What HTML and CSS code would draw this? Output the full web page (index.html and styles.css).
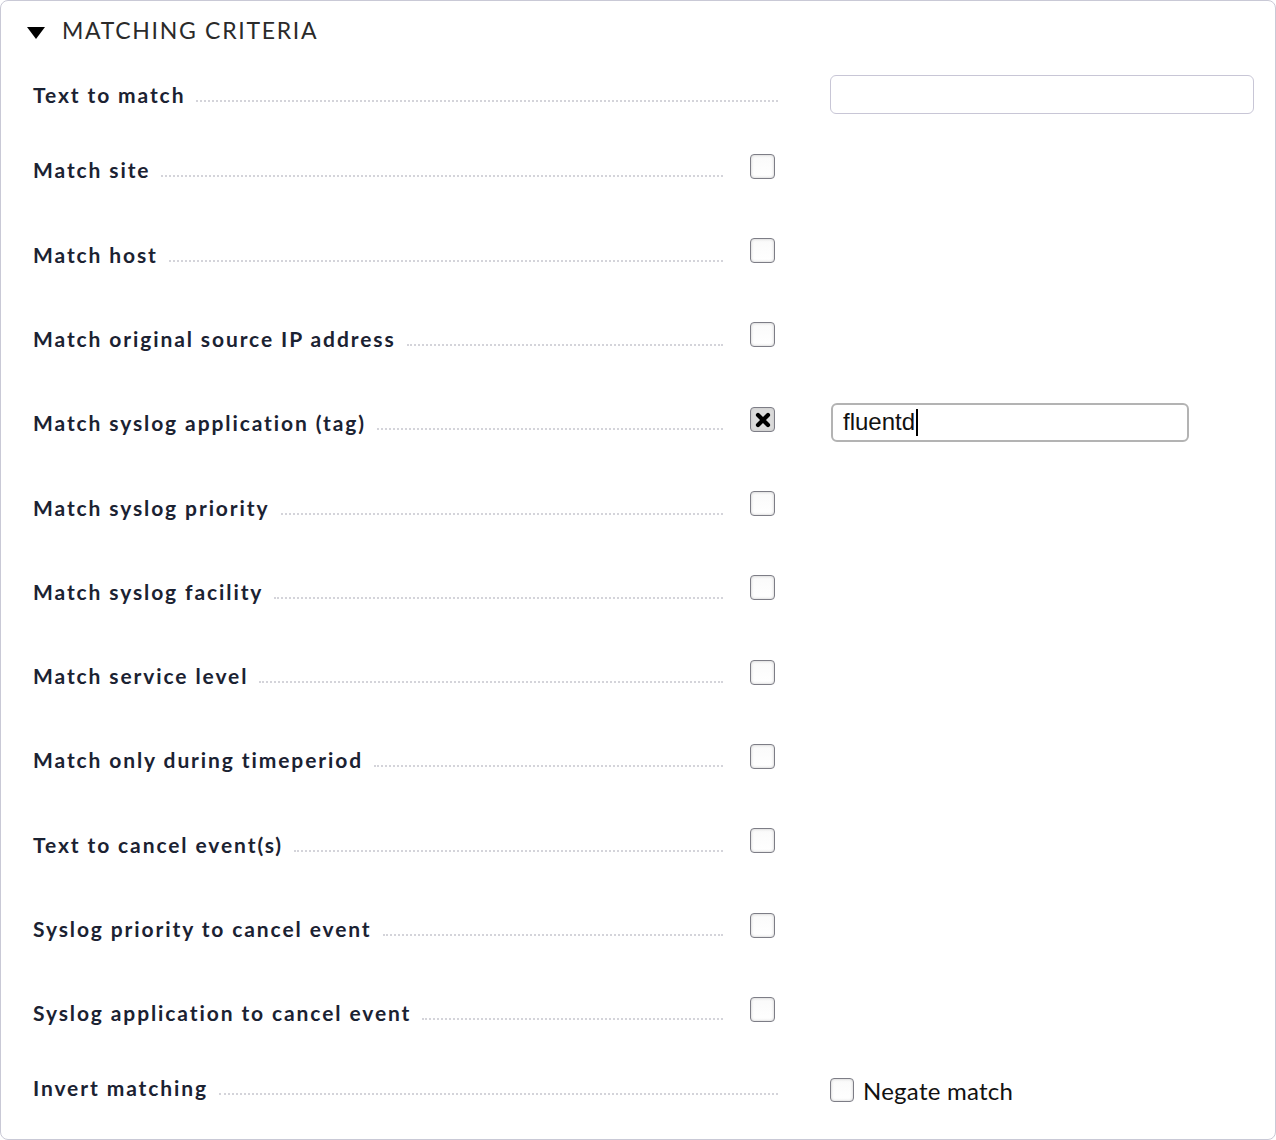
FILE: index.html
```html
<!DOCTYPE html>
<html lang="en">
<head>
<meta charset="utf-8">
<title>Matching criteria</title>
<link rel="stylesheet" href="styles.css">
</head>
<body>
<div class="box">
  <div class="header">
    <svg class="tri" width="18" height="12" viewBox="0 0 18 12"><polygon points="0,0 18,0 9,12" fill="#000"/></svg>
    <span class="title">MATCHING CRITERIA</span>
  </div>

  <div class="row short">
    <div class="legend wide-legend"><div class="lbl"><span class="label">Text to match</span><span class="dots"></span></div></div>
    <div class="content"><input class="text wide" type="text"></div>
  </div>

  <div class="row">
    <div class="legend"><div class="lbl"><span class="label">Match site</span><span class="dots"></span></div><span class="cb"></span></div>
  </div>
  <div class="row">
    <div class="legend"><div class="lbl"><span class="label">Match host</span><span class="dots"></span></div><span class="cb"></span></div>
  </div>
  <div class="row">
    <div class="legend"><div class="lbl"><span class="label">Match original source IP address</span><span class="dots"></span></div><span class="cb"></span></div>
  </div>
  <div class="row">
    <div class="legend"><div class="lbl"><span class="label">Match syslog application (tag)</span><span class="dots"></span></div><span class="cb checked"><svg width="22" height="22" viewBox="0 0 22 22"><path d="M6 6 L16 16 M16 6 L6 16" stroke="#000" stroke-width="4.2" stroke-linecap="round"/></svg></span></div>
    <div class="content"><div class="text focus"><span class="val">fluentd</span><span class="caret"></span></div></div>
  </div>
  <div class="row">
    <div class="legend"><div class="lbl"><span class="label">Match syslog priority</span><span class="dots"></span></div><span class="cb"></span></div>
  </div>
  <div class="row">
    <div class="legend"><div class="lbl"><span class="label">Match syslog facility</span><span class="dots"></span></div><span class="cb"></span></div>
  </div>
  <div class="row">
    <div class="legend"><div class="lbl"><span class="label">Match service level</span><span class="dots"></span></div><span class="cb"></span></div>
  </div>
  <div class="row">
    <div class="legend"><div class="lbl"><span class="label">Match only during timeperiod</span><span class="dots"></span></div><span class="cb"></span></div>
  </div>
  <div class="row">
    <div class="legend"><div class="lbl"><span class="label">Text to cancel event(s)</span><span class="dots"></span></div><span class="cb"></span></div>
  </div>
  <div class="row">
    <div class="legend"><div class="lbl"><span class="label">Syslog priority to cancel event</span><span class="dots"></span></div><span class="cb"></span></div>
  </div>
  <div class="row">
    <div class="legend"><div class="lbl"><span class="label">Syslog application to cancel event</span><span class="dots"></span></div><span class="cb"></span></div>
  </div>

  <div class="row short">
    <div class="legend wide-legend"><div class="lbl"><span class="label">Invert matching</span><span class="dots"></span></div></div>
    <div class="content negate"><span class="cb small"></span><span class="neg-label">Negate match</span></div>
  </div>
</div>
</body>
</html>
```

FILE: styles.css
```css
html, body {
  margin: 0;
  padding: 0;
  background: #fff;
}

.box {
  box-sizing: border-box;
  width: 1276px;
  height: 1140px;
  border: 1px solid #c9c9d6;
  border-radius: 8px;
  background: #fff;
  padding: 0 0 17px 0;
  font-family: Lato, "Open Sans", sans-serif;
}

.header {
  height: 61px;
  display: flex;
  align-items: center;
  padding-left: 26px;
  box-sizing: border-box;
  padding-bottom: 4px;
}

.tri {
  margin-top: 6px;
  margin-right: 17px;
}

.title {
  font-size: 23px;
  letter-spacing: 1.7px;
  color: #2a2a2a;
}

.row {
  display: flex;
  align-items: center;
  height: 84.3px;
  padding-left: 32px;
}

.row.short {
  height: 65.7px;
}

.legend {
  width: 742px;
  display: flex;
  align-items: center;
  flex: none;
}

.legend.wide-legend {
  width: 745px;
}

.lbl {
  flex: 1;
  display: flex;
  align-items: baseline;
}

.label {
  font-weight: 700;
  font-size: 21px;
  letter-spacing: 1.9px;
  color: #1b2232;
  white-space: nowrap;
}

.dots {
  flex: 1;
  height: 0;
  margin-left: 11px;
  border-bottom: 2px dotted #d4d4da;
  position: relative;
  top: -1px;
}

.cb {
  flex: none;
  box-sizing: border-box;
  width: 25px;
  height: 25px;
  margin-left: 27px;
  margin-top: -7px;
  border: 1.5px solid #7d7d86;
  border-radius: 4px;
  background: linear-gradient(#fafafa, #fff);
  box-shadow: inset 0 0 3px #c4c4c4;
  display: flex;
  align-items: center;
  justify-content: center;
}

.cb.checked {
  background: #dcdcdc;
  margin-top: -6px;
}

.content {
  margin-left: 52px;
  display: flex;
  align-items: center;
}

.text {
  box-sizing: border-box;
  border: 1px solid #c8c6d6;
  border-radius: 6px;
  background: #fff;
  height: 39px;
  outline: none;
}

.text.wide {
  width: 424px;
  margin-top: 0;
}

.text.focus {
  width: 358px;
  height: 39px;
  margin-left: 4px;
  margin-top: -1px;
  border: 2px solid #b3b3b3;
  display: flex;
  align-items: center;
  padding-left: 10px;
  font-family: "Liberation Sans", Arial, sans-serif;
  font-size: 24px;
  color: #111;
}

.caret {
  display: inline-block;
  width: 2px;
  height: 27px;
  background: #000;
  margin-left: 1px;
}

.negate {
  margin-top: 5px;
}

.cb.small {
  width: 24px;
  height: 24px;
  margin: 0;
}

.neg-label {
  margin-left: 9px;
  font-size: 24px;
  letter-spacing: 0.25px;
  color: #111;
}
```
